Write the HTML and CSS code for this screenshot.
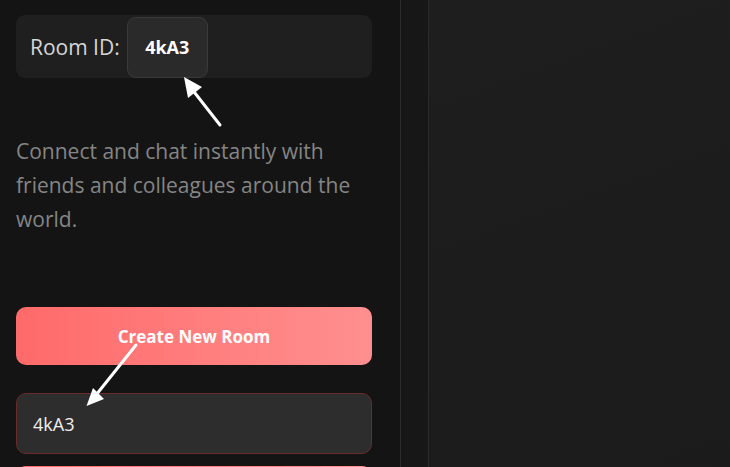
FILE: index.html
```html
<!DOCTYPE html>
<html>
<head>
<meta charset="utf-8">
<link rel="stylesheet" href="styles.css">
</head>
<body>
<div class="app">
  <aside class="sidebar">
    <div class="room-box">
      <span class="room-label">Room ID:</span>
      <span class="room-code">4kA3</span>
    </div>
    <p class="desc">Connect and chat instantly with friends and colleagues around the world.</p>
    <button class="btn-create">Create New Room</button>
    <input class="room-input" type="text" value="4kA3">
    <button class="btn-join">Join Room</button>
  </aside>
  <div class="strip"></div>
  <main class="main"></main>
</div>
<svg class="arrows" width="730" height="467" viewBox="0 0 730 467">
  <line x1="220" y1="125" x2="191" y2="88" stroke="#fff" stroke-width="3" stroke-linecap="round"/>
  <polygon points="184,77 202,87 188,98" fill="#fff"/>
  <line x1="136" y1="345" x2="96" y2="395" stroke="#fff" stroke-width="3" stroke-linecap="round"/>
  <polygon points="86.5,406 104,399 93,388" fill="#fff"/>
</svg>
</body>
</html>
```
FILE: styles.css
```css
* { box-sizing: border-box; }
html, body { margin: 0; padding: 0; height: 100%; overflow: hidden; }
body {
  background: #141414;
  font-family: "Open Sans", "Noto Sans", sans-serif;
  color: #eee;
  position: relative;
}
.app {
  display: flex;
  height: 467px;
  overflow: hidden;
}
.sidebar {
  width: 401px;
  flex: none;
  padding: 15px 28px 0 16px;
  border-right: 1px solid #2b2b2b;
  background: #141414;
  display: flex;
  flex-direction: column;
  overflow: hidden;
}
.sidebar > * { flex: none; }
.room-box {
  height: 63px;
  background: #1f1f1f;
  border-radius: 9px;
  display: flex;
  align-items: center;
  padding: 1px 0 0 14px;
}
.room-label {
  font-size: 21px;
  color: #d6d6d6;
  margin-right: 7px;
}
.room-code {
  width: 81px;
  height: 61px;
  border: 1px solid #3a3a3a;
  background: #2a2a2a;
  border-radius: 9px;
  display: flex;
  align-items: center;
  justify-content: center;
  font-weight: 700;
  font-size: 18px;
  color: #fff;
}
.desc {
  margin: 56px 0 0;
  font-size: 21px;
  line-height: 34px;
  color: #858585;
}
.btn-create, .btn-join {
  height: 58px;
  border: none;
  border-radius: 10px;
  background: linear-gradient(90deg, #ff6a6a 0%, #ff8f8f 100%);
  color: #fff;
  font-family: inherit;
  font-weight: 700;
  font-size: 17px;
  padding: 0;
}
.btn-create { margin-top: 71px; }
.btn-join { margin-top: 12px; }
.room-input {
  margin-top: 28px;
  height: 61px;
  border: 1px solid #6a2b2b;
  border-radius: 10px;
  background: #2d2d2d;
  color: #f0f0f0;
  font-family: inherit;
  font-size: 18px;
  padding: 0 0 0 16px;
  outline: none;
}
.strip {
  width: 28px;
  flex: none;
  background: #171717;
  border-right: 1px solid #2b2b2b;
}
.main {
  flex: 1;
  background: linear-gradient(160deg, #1e1e1e 0%, #1b1b1b 100%);
}
.arrows {
  position: absolute;
  left: 0;
  top: 0;
  pointer-events: none;
}
```
